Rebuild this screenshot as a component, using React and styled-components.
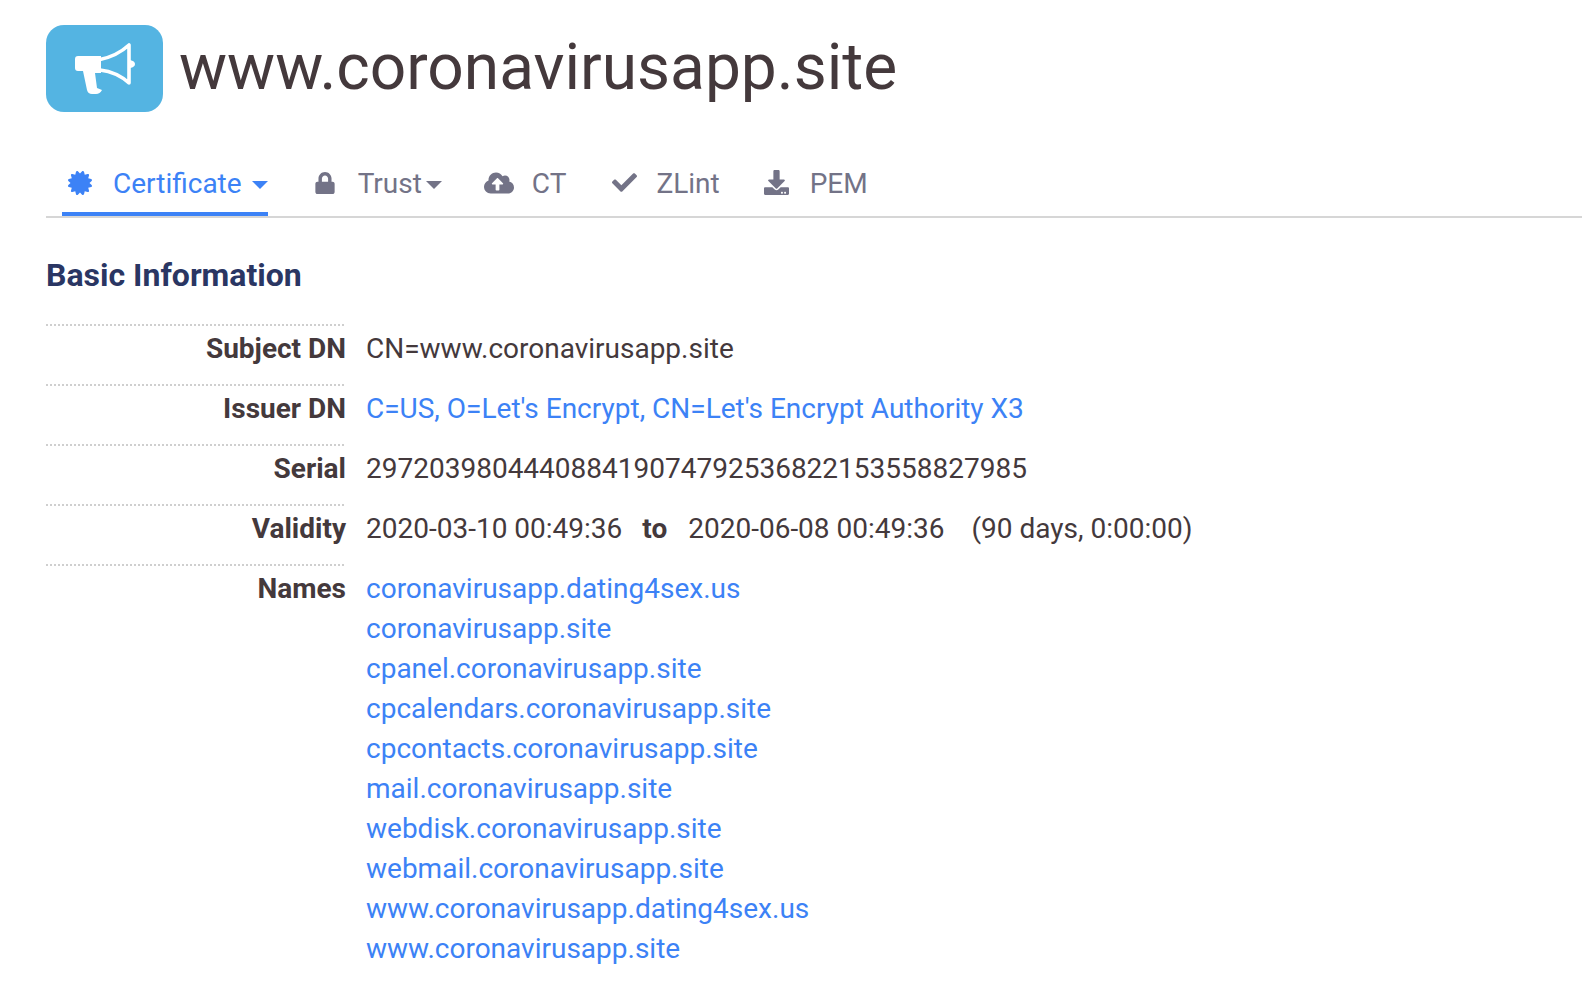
import React from 'react';
import styled, { createGlobalStyle } from 'styled-components';
import { FaCertificate, FaLock, FaCloudUploadAlt, FaCheck, FaDownload } from 'react-icons/fa';

const GlobalStyle = createGlobalStyle`
  body {
    margin: 0;
    background: #fff;
    font-family: Roboto, "Liberation Sans", sans-serif;
    color: #44393c;
  }
`;

const Page = styled.div`
  padding: 25px 0 0 46px;
`;

const Header = styled.header`
  display: flex;
  align-items: center;
  gap: 16px;
  height: 87px;
`;

const Logo = styled.div`
  width: 117px;
  height: 87px;
  border-radius: 18px;
  background: #54b4e2;
  display: flex;
  align-items: center;
  justify-content: center;
`;

const Title = styled.h1`
  margin: 0 0 2px;
  font-size: 64px;
  font-weight: 400;
  line-height: 84px;
  color: #44393c;
`;

const Tabs = styled.nav`
  display: flex;
  margin-top: 41px;
  padding-left: 16px;
  height: 63px;
  border-bottom: 2px solid #d6d6d6;
`;

const Tab = styled.div`
  display: flex;
  align-items: center;
  height: 57px;
  padding-top: 2px;
  padding-left: ${(p) => p.$padLeft || 0}px;
  font-size: 28px;
  color: ${(p) => (p.$active ? '#3c82f6' : '#737387')};
  border-bottom: ${(p) => (p.$active ? '4px solid #3c82f6' : '4px solid transparent')};
  margin-right: ${(p) => p.$gap || 0}px;
`;

const TabIcon = styled.span`
  display: flex;
  box-sizing: border-box;
  width: ${(p) => p.$width}px;
  padding-left: ${(p) => p.$left || 0}px;
  margin-top: -2px;
  font-size: ${(p) => p.$size || 24}px;
`;

const Caret = styled.span`
  width: 0;
  height: 0;
  margin-left: ${(p) => p.$left}px;
  margin-top: 2px;
  border-left: 8px solid transparent;
  border-right: 8px solid transparent;
  border-top: 8px solid currentColor;
`;

const SectionTitle = styled.h2`
  margin: 37px 0 29px;
  font-size: 32px;
  line-height: 40px;
  font-weight: 700;
  color: #2a3663;
`;

const Row = styled.div`
  display: flex;
`;

const Label = styled.div`
  box-sizing: border-box;
  width: 298px;
  height: 60px;
  padding-top: 3px;
  border-top: 2px dotted #cfcfcf;
  font-size: 28px;
  line-height: 40px;
  font-weight: 700;
  color: #44393c;
`;

const LabelText = styled.div`
  margin-right: -2px;
  text-align: right;
`;

const Value = styled.div`
  margin-left: 22px;
  padding-top: 5px;
  font-size: 28px;
  line-height: 40px;
  color: ${(p) => (p.$link ? '#3c82f6' : '#44393c')};
`;

const Strong = styled.b`
  margin: 0 21px 0 20px;
`;

const Range = styled.span`
  margin-left: 27px;
`;

const NameLink = styled.div`
  color: #3c82f6;
`;

function Megaphone() {
  return (
    <svg width="60" height="52" viewBox="0 0 60 52" fill="none">
      <path
        d="M26 13 H3 Q0 13 0 16 V25 Q0 28 3 28 H8 L12 47 Q13 51 17 51 H21 Q25 51 27 47 L22 45 L20 30 H26 Z"
        fill="#fff"
      />
      <path
        d="M25 16.5 Q42 13 54 2 V40 Q42 29 25 27"
        stroke="#fff"
        strokeWidth="3.6"
        strokeLinejoin="round"
        strokeLinecap="round"
      />
      <path d="M55 17 Q60 18 60 21 Q60 24 55 25 Z" fill="#fff" />
    </svg>
  );
}

const names = [
  'coronavirusapp.dating4sex.us',
  'coronavirusapp.site',
  'cpanel.coronavirusapp.site',
  'cpcalendars.coronavirusapp.site',
  'cpcontacts.coronavirusapp.site',
  'mail.coronavirusapp.site',
  'webdisk.coronavirusapp.site',
  'webmail.coronavirusapp.site',
  'www.coronavirusapp.dating4sex.us',
  'www.coronavirusapp.site',
];

export default function App() {
  return (
    <Page>
      <GlobalStyle />
      <Header>
        <Logo><Megaphone /></Logo>
        <Title>www.coronavirusapp.site</Title>
      </Header>
      <Tabs>
        <Tab $active $padLeft={6} $gap={46}>
          <TabIcon $width={45}><FaCertificate /></TabIcon>
          Certificate
          <Caret $left={10} />
        </Tab>
        <Tab $gap={42}>
          <TabIcon $width={44} $size={22}><FaLock /></TabIcon>
          Trust
          <Caret $left={4} />
        </Tab>
        <Tab $gap={44}>
          <TabIcon $width={48} $size={30}><FaCloudUploadAlt /></TabIcon>
          CT
        </Tab>
        <Tab $gap={44}>
          <TabIcon $width={46} $left={2} $size={25}><FaCheck /></TabIcon>
          ZLint
        </Tab>
        <Tab>
          <TabIcon $width={46} $size={25}><FaDownload /></TabIcon>
          PEM
        </Tab>
      </Tabs>
      <SectionTitle>Basic Information</SectionTitle>
      <Row>
        <Label><LabelText>Subject DN</LabelText></Label>
        <Value>CN=www.coronavirusapp.site</Value>
      </Row>
      <Row>
        <Label><LabelText>Issuer DN</LabelText></Label>
        <Value $link>C=US, O=Let's Encrypt, CN=Let's Encrypt Authority X3</Value>
      </Row>
      <Row>
        <Label><LabelText>Serial</LabelText></Label>
        <Value>297203980444088419074792536822153558827985</Value>
      </Row>
      <Row>
        <Label><LabelText>Validity</LabelText></Label>
        <Value>
          2020-03-10 00:49:36<Strong>to</Strong>2020-06-08 00:49:36
          <Range>(90 days, 0:00:00)</Range>
        </Value>
      </Row>
      <Row>
        <Label><LabelText>Names</LabelText></Label>
        <Value>
          {names.map((name) => (
            <NameLink key={name}>{name}</NameLink>
          ))}
        </Value>
      </Row>
    </Page>
  );
}
